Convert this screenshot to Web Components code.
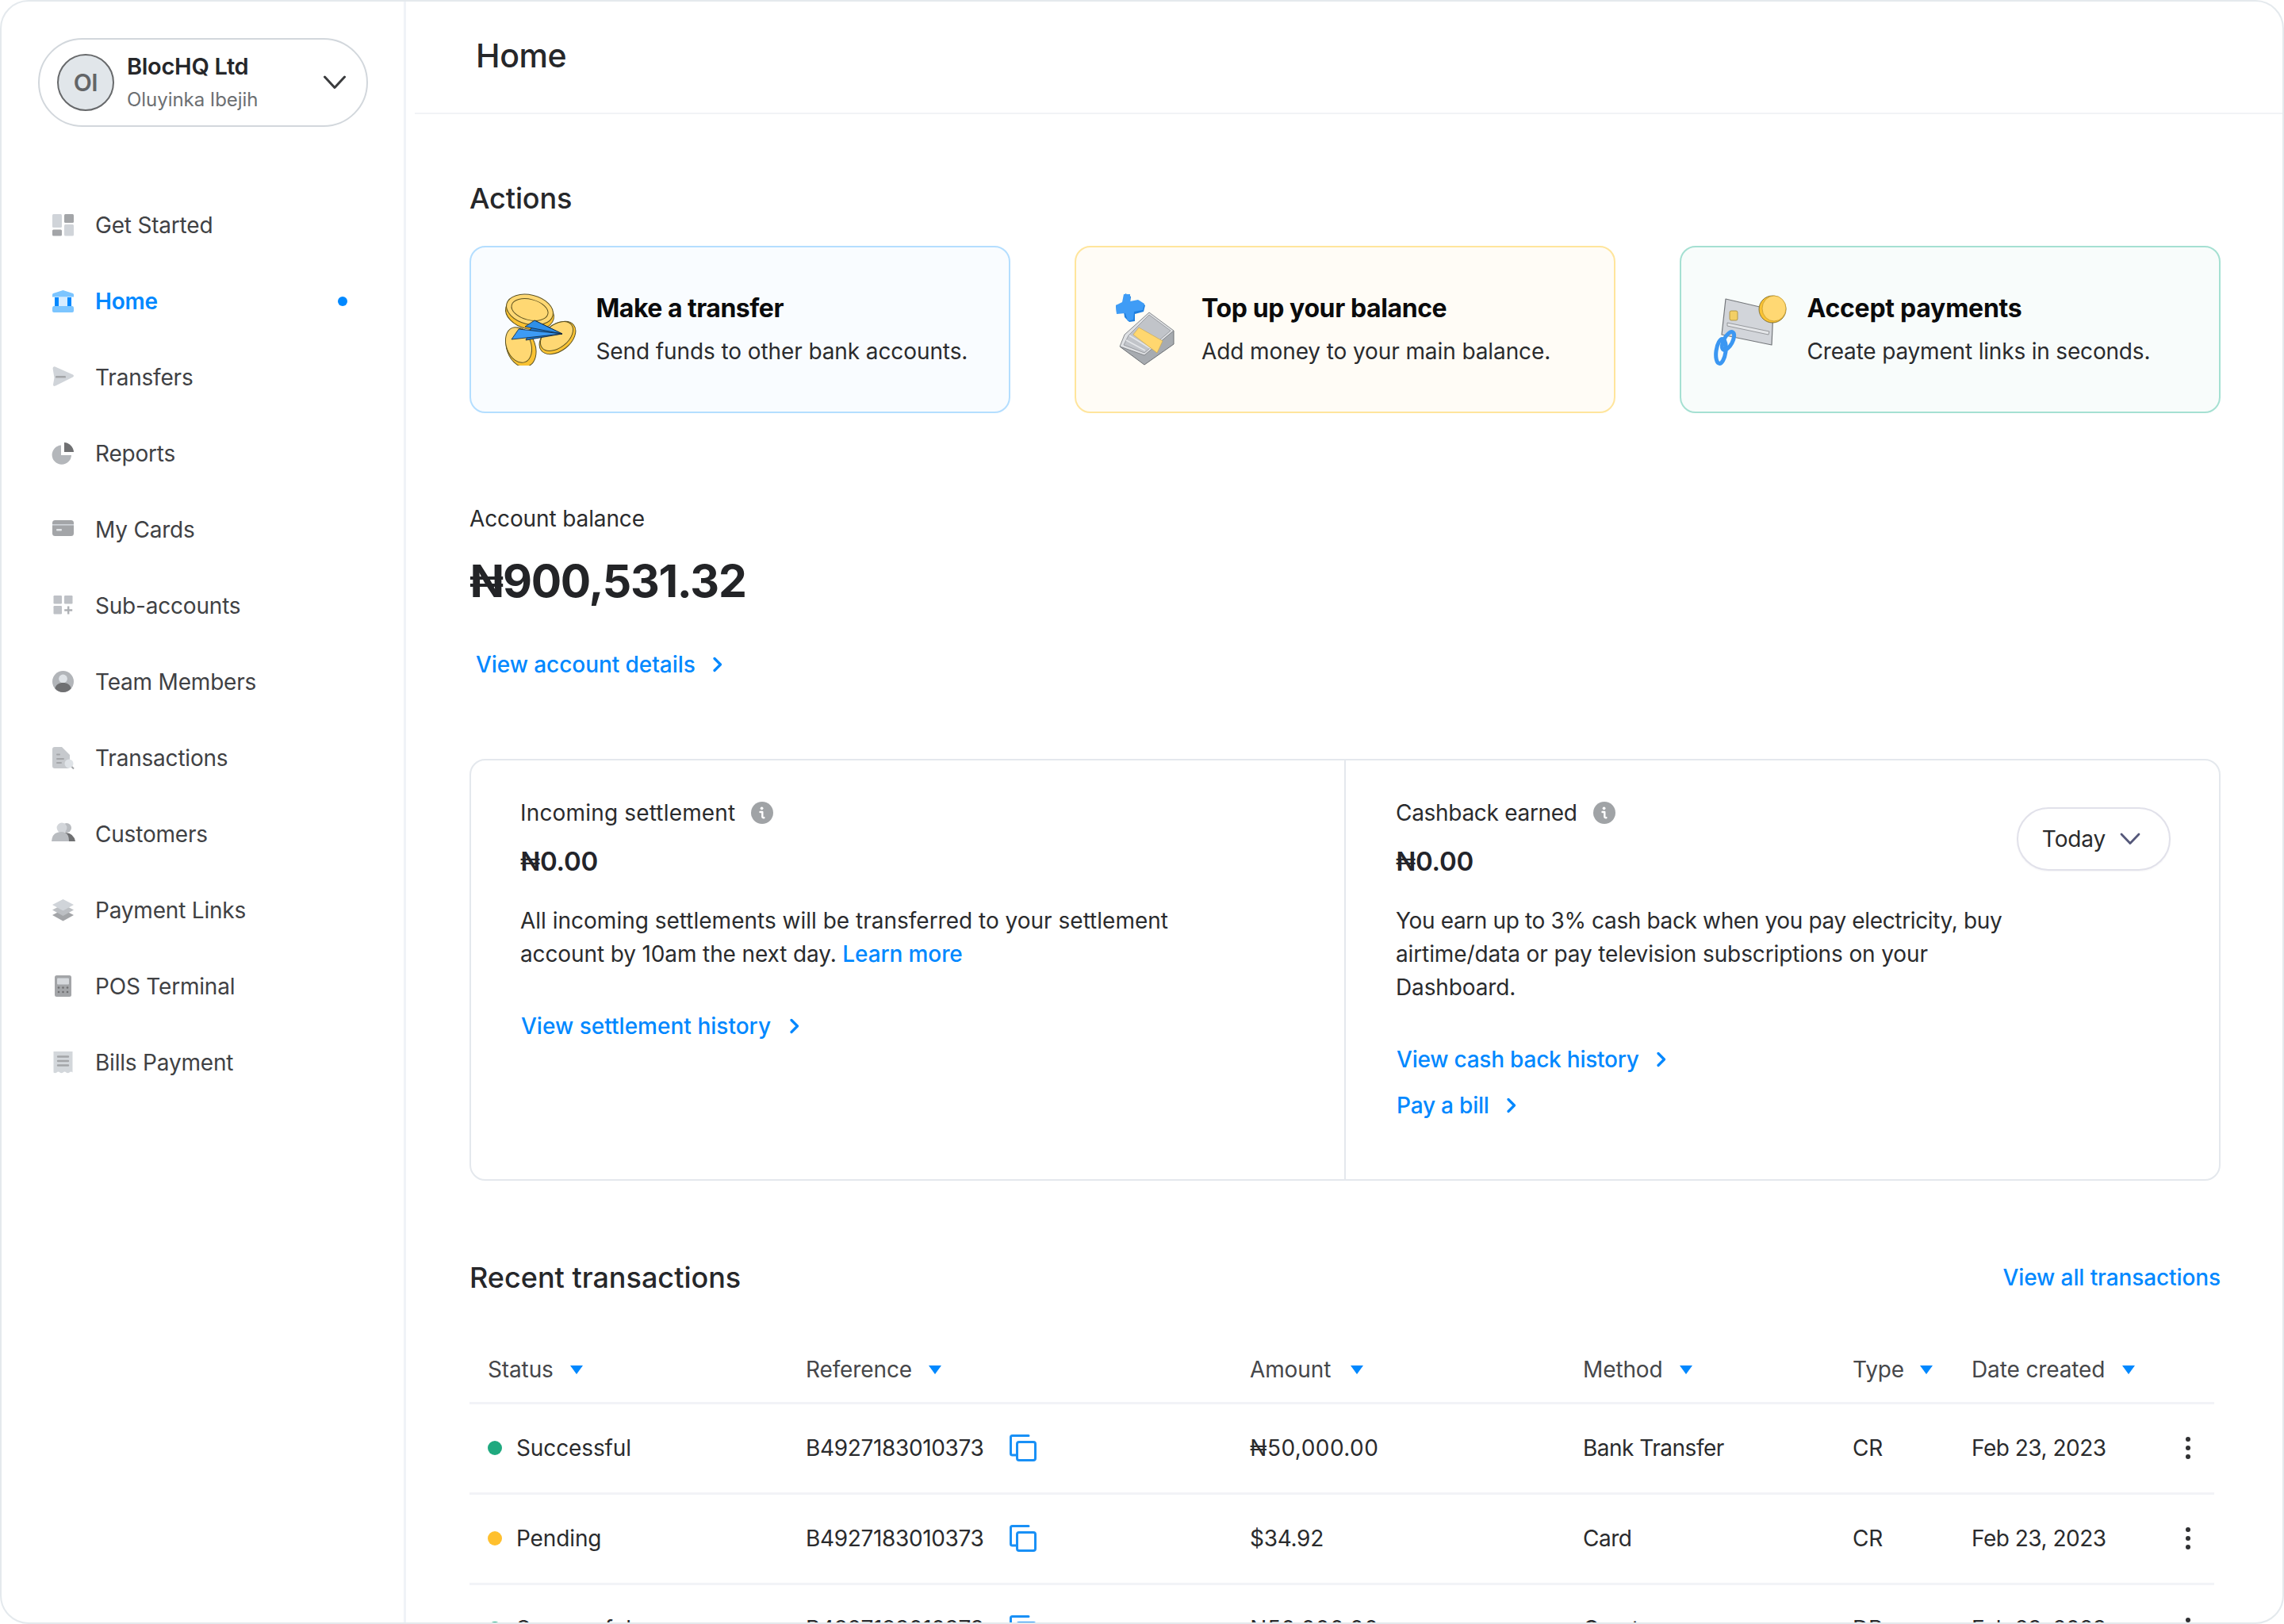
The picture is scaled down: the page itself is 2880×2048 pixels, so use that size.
<!DOCTYPE html>
<html lang="en"><head><meta charset="utf-8"><title>Home</title>
<style>
html,body{margin:0;padding:0;background:#fff;font-family:Inter,"Liberation Sans",sans-serif;color:#26272a}
</style></head><body>
<app-frame>
  <side-bar slot="side">
    <account-switcher></account-switcher>
    <nav-item icon="started">Get Started</nav-item>
    <nav-item icon="home" active>Home</nav-item>
    <nav-item icon="transfers">Transfers</nav-item>
    <nav-item icon="reports">Reports</nav-item>
    <nav-item icon="cards">My Cards</nav-item>
    <nav-item icon="sub">Sub-accounts</nav-item>
    <nav-item icon="team">Team Members</nav-item>
    <nav-item icon="tx">Transactions</nav-item>
    <nav-item icon="customers">Customers</nav-item>
    <nav-item icon="links">Payment Links</nav-item>
    <nav-item icon="pos">POS Terminal</nav-item>
    <nav-item icon="bills">Bills Payment</nav-item>
  </side-bar>
  <home-page slot="main"></home-page>
</app-frame>
<script>
const def=(n,html,fn)=>customElements.define(n,class extends HTMLElement{
  connectedCallback(){if(this.shadowRoot)return;const s=this.attachShadow({mode:'open'});s.innerHTML=typeof html==='function'?html(this):html;fn&&fn(this,s)}
});
const FONT='font-family:Inter,"Liberation Sans",sans-serif;';

def('app-frame',`<style>
:host{display:block;width:2880px;height:2048px;overflow:hidden;${FONT}}
.f{box-sizing:border-box;width:2880px;height:2048px;border:2px solid #e4e9ed;border-radius:36px;overflow:hidden;display:grid;grid-template-columns:510px 1fr;background:#fff}
</style><div class="f"><slot name="side"></slot><slot name="main"></slot></div>`);

def('side-bar',`<style>
:host{display:block;box-sizing:border-box;height:2044px;border-right:3px solid #f0f3f7;padding:46px 0 0 0}
</style><slot></slot>`);

def('account-switcher',`<style>
:host{display:flex;box-sizing:border-box;width:416px;height:112px;margin:0 0 76px 46px;border:2px solid #d2d7dc;border-radius:56px;align-items:center;padding:0 26px 0 22px}
.av{box-sizing:border-box;width:72px;height:72px;border-radius:50%;background:#e1e6ea;border:2px solid #67696b;display:flex;align-items:center;justify-content:center;font-size:30px;font-weight:600;color:#636567;letter-spacing:-.5px;flex:none}
.t{margin-left:16px;flex:1;display:flex;flex-direction:column;gap:10px}
.a{font-size:29px;line-height:34px;font-weight:600;color:#26272a;letter-spacing:-.3px}
.b{font-size:24px;line-height:30px;color:#6c6f72;letter-spacing:-.05px}
svg{flex:none;display:block}
</style><div class="av">OI</div><div class="t"><div class="a">BlocHQ Ltd</div><div class="b">Oluyinka Ibejih</div></div>
<svg width="28" height="18" viewBox="0 0 28 18"><path d="M1.5 2 L14 15.5 L26.5 2" fill="none" stroke="#3a3b3d" stroke-width="3" stroke-linecap="round" stroke-linejoin="round"/></svg>`);

const L='#d0d4d9',M='#b4b7bb',D='#a3a5a8',K='#6f7072';
const ICONS={
started:`<rect x="0" y="0" width="12" height="17" rx="1.5" fill="${L}"/><rect x="15" y="0" width="12" height="11" rx="1.5" fill="${D}"/><rect x="0" y="19.5" width="12" height="8" rx="1.5" fill="${D}"/><rect x="15" y="13" width="12" height="14.5" rx="1.5" fill="${L}"/>`,
home:`<path d="M13.5 0 L26 4 Q27 4.6 27 6 L27 8.5 L0 8.5 L0 6 Q0 4.6 1 4 Z" fill="#7cc5ff"/><rect x="8" y="9" width="11" height="11" fill="#d6ecff"/><rect x="3" y="9" width="5" height="11" fill="#0088ff"/><rect x="19" y="9" width="5" height="11" fill="#0088ff"/><path d="M2 20 L25 20 Q27 20 27 23 L27 26 Q27 28 25 28 L2 28 Q0 28 0 26 L0 23 Q0 20 2 20Z" fill="#7cc5ff"/>`,
transfers:`<path d="M3.6.4 L26 10.5 Q28 12 26 13.6 L4 24.6 Q1 25.8 1 23 L2.5 14.5 L0.6 3 Q.6 -.2 3.6 .4Z" fill="${L}"/><rect x="4" y="12" width="13" height="2.6" rx="1.2" fill="${D}"/>`,
reports:`<path d="M11 3.4 A12.2 12.2 0 1 0 24 16 L11 16 Z" fill="${M}"/><path d="M15 0 A13 13 0 0 1 27 12 L15 12 Z" fill="${K}"/>`,
cards:`<rect x="0" y="2" width="27" height="20" rx="3.5" fill="${D}"/><rect x="0" y="7" width="27" height="1.6" fill="${L}"/><rect x="5" y="13" width="7" height="2.4" rx="1" fill="#e2e5e8"/>`,
sub:`<rect x="1.5" y="1" width="10.5" height="10.5" rx="1.2" fill="#bec1c6"/><rect x="15" y="1" width="10.5" height="10.5" rx="1.2" fill="#bec1c6"/><rect x="1.5" y="14" width="10.5" height="10.5" rx="1.2" fill="#bec1c6"/><path d="M20.2 14.5 V24.5 M15.2 19.5 H25.2" stroke="#aeb1b5" stroke-width="2.4" fill="none"/>`,
team:`<circle cx="13.5" cy="13.5" r="13.5" fill="#b2b5b9"/><circle cx="13.5" cy="10" r="5.4" fill="#dfe3e7"/><path d="M3.3 22.3 C4.5 17 8.5 15 13.5 15 C18.5 15 22.5 17 23.7 22.3 A13.5 13.5 0 0 1 3.3 22.3Z" fill="${K}"/>`,
tx:`<path d="M3 0 L12 0 L22 10 L22 23 Q22 27 19 27 L3 27 Q0 27 0 24 L0 3 Q0 0 3 0Z" fill="#c6c9cd"/><rect x="5" y="8.5" width="5" height="2" rx="1" fill="${D}"/><rect x="5" y="14" width="10" height="2" rx="1" fill="${D}"/><rect x="5" y="19" width="7" height="2" rx="1" fill="${D}"/><circle cx="21" cy="21" r="5.5" fill="#dfe3e7"/><path d="M24.5 25 L27 27.5" stroke="${D}" stroke-width="2"/>`,
customers:`<circle cx="18" cy="6" r="6" fill="#b9bcc0"/><path d="M8 23 Q9 13 17 12 Q27 13 29 23Z" fill="${K}"/><circle cx="12" cy="6" r="6.4" fill="#d3d6da"/><path d="M-1 23 Q0 13.5 6 12 Q12 10 16 12 Q21 14 21 23Z" fill="#b9bcc0"/>`,
links:`<path d="M13.5 13 L27 20 L13.5 27.5 L0 20Z" fill="${D}"/><path d="M13.5 6.5 L27 13.5 L13.5 21 L0 13.5Z" fill="#bcbfc3"/><path d="M13.5 0 L27 7 L13.5 14.5 L0 7Z" fill="${L}"/>`,
pos:`<rect x="3" y="0" width="21" height="27" rx="2.5" fill="${D}"/><rect x="6" y="3.5" width="15" height="8" rx="1" fill="#d6d9dd"/><g fill="#6f7072"><circle cx="8" cy="15.5" r="1.3"/><circle cx="13.5" cy="15.5" r="1.3"/><circle cx="19" cy="15.5" r="1.3"/><circle cx="8" cy="21" r="1.3"/><circle cx="13.5" cy="21" r="1.3"/><circle cx="19" cy="21" r="1.3"/></g>`,
bills:`<path d="M1.5 0 L25.5 0 L25.5 26.5 Q23.5 24.5 21.5 26.5 Q19.5 28 17.5 26.5 Q15.5 24.5 13.5 26.5 Q11.5 28 9.5 26.5 Q7.5 24.5 5.5 26.5 Q3.5 28 1.5 26.5Z" fill="#d3d7db"/><path d="M7 6.5 H20 M7 12 H20 M7 17.5 H20" stroke="${D}" stroke-width="2.4" stroke-linecap="round"/>`
};
def('nav-item',h=>`<style>
:host{display:flex;align-items:center;height:96px;margin-left:64px;width:394px;font-size:28px;color:${h.hasAttribute('active')?'#0088ff':'#404144'};font-weight:${h.hasAttribute('active')?600:400};letter-spacing:-.2px}
svg{width:28px;height:28px;flex:none;overflow:visible;display:block}
.t{margin-left:26px;flex:1}
.d{width:12px;height:12px;border-radius:50%;background:#0088ff;margin-right:22px}
</style><svg viewBox="0 0 28 28">${ICONS[h.getAttribute('icon')]}</svg><span class="t"><slot></slot></span>${h.hasAttribute('active')?'<span class="d"></span>':''}`);

const ILLO={
transfer:`<svg width="94" height="92" viewBox="634 371 94 92">
<g stroke="#5d5220" stroke-width="1">
<ellipse cx="668" cy="397" rx="31" ry="20" transform="rotate(14 668 397)" fill="#f9c233"/>
<ellipse cx="668" cy="392.5" rx="30" ry="18.5" transform="rotate(14 668 392.5)" fill="#ffd873"/>
<ellipse cx="668" cy="392.5" rx="23.5" ry="13" transform="rotate(14 668 392.5)" fill="#ffd873"/>
<ellipse cx="703" cy="428" rx="16.5" ry="26" transform="rotate(52 703 428)" fill="#f9c233"/>
<ellipse cx="702" cy="426" rx="14.5" ry="23.5" transform="rotate(52 702 426)" fill="#ffd873"/>
<ellipse cx="657" cy="440" rx="18" ry="25.5" transform="rotate(-20 657 440)" fill="#f9c233"/>
<ellipse cx="654" cy="437" rx="15.5" ry="23" transform="rotate(-20 654 437)" fill="#ffd873"/>
</g>
<path d="M674 406 L709 423 L663 431Z" fill="#1d76cc" stroke="#123" stroke-width=".8"/>
<path d="M674 406 L709 423 L662 414Z" fill="#2f8fe8" stroke="#123" stroke-width=".8"/>
<path d="M654 417 L709 423 L645 430Z" fill="#3d9bf5" stroke="#123" stroke-width=".8"/>
</svg>`,
topup:`<svg width="94" height="92" viewBox="1400 370 94 92">
<path d="M1419 371 L1426 375 L1425 383 L1436 380 L1444 386 L1442 394 L1431 397 L1431 406 L1424 407 L1418 401 L1417 394 L1408 396 L1407 386 L1418 383Z" fill="#1e7fdf"/>
<path d="M1417 372 L1425 372 L1425 381 L1435 379 L1443 384 L1441 392 L1430 394 L1429 404 L1422 406 L1419 396 L1408 397 L1407 386 L1415 382Z" fill="#3f9cf6"/>
<path d="M1412 438 L1443 461 L1480 435 L1480 418 L1443 447Z" fill="#a7abb0" stroke="#6d7074" stroke-width="1"/>
<path d="M1418 423 L1449 395 L1480 418 L1443 449 L1412 438Z" fill="#dfe1e4" stroke="#85888c" stroke-width="1" stroke-linejoin="round"/>
<path d="M1423 424 L1449 398 L1476 418 L1443 446 L1417 436Z" fill="#c1c4c9" stroke="#8e9195" stroke-width=".8"/>
<path d="M1420 430 L1444 443 M1424 424 L1450 440" stroke="#e4e6e9" stroke-width="1.6" fill="none"/>
<path d="M1436 414 L1466 431 L1459 446 L1429 423Z" fill="#ffd76f" stroke="#c7a54a" stroke-width=".6"/>
</svg>`,
accept:`<svg width="94" height="92" viewBox="2160 370 94 92">
<path d="M2176 378 L2236 392 L2234 436 L2171 423Z" fill="#d2d5da" stroke="#74777b" stroke-width="1.2" stroke-linejoin="round"/>
<rect x="2181" y="393" width="10" height="12" rx="2" fill="#f3cf66" stroke="#a58a39" stroke-width=".8"/>
<path d="M2178 408 L2231 419 L2230 423 L2178 412Z" fill="#e4e6e9" stroke="#85888c" stroke-width=".8"/>
<circle cx="2235" cy="391" r="17" fill="#f9c233" stroke="#6d5f23" stroke-width=".8"/>
<ellipse cx="2237" cy="390" rx="15" ry="16" fill="#ffd873" stroke="#c79b2c" stroke-width=".8"/>
<ellipse cx="2170" cy="444" rx="6" ry="15.5" transform="rotate(8 2170 444)" fill="none" stroke="#3b97f2" stroke-width="5"/>
<ellipse cx="2179" cy="431" rx="5.5" ry="12.5" transform="rotate(28 2179 431)" fill="none" stroke="#3b97f2" stroke-width="5"/>
</svg>`};
def('action-card',h=>{const v=h.getAttribute('v');const c={transfer:['#b4deff','#f9fcff','39.5px','24px','-.5px','-.1px'],topup:['#ffe59c','#fffcf6','43px','21px','-.4px','-.1px'],accept:['#a5e0d2','#f8fcfb','39.5px','25px','-.25px','-.18px']}[v];return `<style>
:host{display:flex;box-sizing:border-box;height:211px;border:2.5px solid ${c[0]};background:${c[1]};border-radius:20px;align-items:center;padding-left:${c[2]}}
svg{flex:none;display:block;margin-top:-1px}
.t{margin-left:${c[3]};display:flex;flex-direction:column;gap:18px}
b{font-size:32px;line-height:36px;font-weight:700;color:#0b0b0c;letter-spacing:${c[4]}}
span{font-size:28px;line-height:36px;color:#2a2b2d;letter-spacing:${c[5]};white-space:nowrap}
</style>${ILLO[v]}<div class="t"><b>${h.getAttribute('h')}</b><span>${h.getAttribute('d')}</span></div>`});

def('more-link',`<style>
:host{display:flex;align-items:center;height:40px;gap:22px;font-size:28px;font-weight:500;color:#0088ff;letter-spacing:-.06px}
svg{display:block;flex:none}
</style><span><slot></slot></span><svg width="12" height="20" viewBox="0 0 12 20"><path d="M2 2.5 L9.5 10 L2 17.5" fill="none" stroke="#0088ff" stroke-width="3.2" stroke-linecap="round" stroke-linejoin="round"/></svg>`);

def('info-dot',`<style>:host{display:inline-flex}svg{display:block}</style><svg width="28" height="28" viewBox="0 0 28 28"><circle cx="14" cy="14" r="14" fill="#a0a3a6"/><circle cx="13.6" cy="8.3" r="1.9" fill="#fff"/><path d="M11.5 13 H14.3 V19 Q14.3 20.4 16.4 20.2" fill="none" stroke="#fff" stroke-width="2.4" stroke-linecap="round" stroke-linejoin="round"/></svg>`);

def('stat-block',h=>`<style>
:host{display:block}
.h{display:flex;align-items:center;gap:20px;font-size:28px;line-height:40px;letter-spacing:${h.getAttribute('hs')||'-.12px'};color:#2a2b2d}
.v{font-size:33px;line-height:48px;font-weight:600;margin-top:17px;color:#23242a;letter-spacing:-.2px}
.p{font-size:28px;line-height:42px;margin-top:30px;color:#2a2b2d;letter-spacing:-.12px;white-space:nowrap}
.l{margin-top:50px;display:flex;flex-direction:column;gap:18px;margin-left:1px}
</style><div class="h"><span>${h.getAttribute('h')}</span><info-dot></info-dot></div><div class="v">${h.getAttribute('v')}</div><div class="p"><slot></slot></div><div class="l"><slot name="link"></slot></div>`);

def('today-select',`<style>
:host{display:flex;box-sizing:border-box;width:194px;height:80px;border:2px solid #e1e1ea;border-radius:40px;align-items:center;justify-content:center;gap:18px;font-size:28px;letter-spacing:-.12px;color:#2a2b2d;box-shadow:0 1px 2px rgba(40,40,80,.05);background:#fff;padding-right:6px}
svg{display:block}
</style><span>Today</span><svg width="26" height="16" viewBox="0 0 26 16"><path d="M2 2 L13 13.5 L24 2" fill="none" stroke="#55587a" stroke-width="2.8" stroke-linecap="round" stroke-linejoin="round"/></svg>`);

const COLS='grid-template-columns:401px 560px 420px 340px 150px 244px 1fr;';
def('tx-head',`<style>
:host{display:grid;${COLS}height:84px;align-items:center;box-sizing:border-box;padding:0 0 2px 23px;border-bottom:3px solid #f2f3f7;font-size:28px;color:#46474a;letter-spacing:-.12px}
.c{display:flex;align-items:center;gap:21px}
i{display:block;width:0;height:0;border-left:8.5px solid transparent;border-right:8.5px solid transparent;border-top:11px solid #0088ff;margin-top:1px}
</style>
<div class="c">Status<i></i></div><div class="c">Reference<i></i></div><div class="c" style="gap:25px">Amount<i></i></div><div class="c">Method<i></i></div><div class="c" style="gap:20px">Type<i></i></div><div class="c" style="gap:22px">Date created<i></i></div>`);

def('tx-row',h=>{const a=n=>h.getAttribute(n);return `<style>
:host{display:grid;${COLS}height:114px;align-items:center;box-sizing:border-box;padding:0 0 2px 23px;border-bottom:3px solid #f2f3f7;font-size:28px;color:#2a2b2d;letter-spacing:-.12px}
.c{display:flex;align-items:center}
.dot{width:18px;height:18px;border-radius:50%;background:${a('color')};margin-right:18px;flex:none}
svg{display:block;flex:none}
</style>
<div class="c"><span class="dot"></span>${a('status')}</div>
<div class="c"><span style="letter-spacing:-.35px">B4927183010373</span><svg style="margin-left:32px" width="34" height="34" viewBox="0 0 34 34"><path d="M8 26 H3.5 Q1.5 26 1.5 24 V3.5 Q1.5 1.5 3.5 1.5 H24" fill="none" stroke="#1990f6" stroke-width="3" stroke-linecap="round"/><rect x="9.5" y="9.5" width="23" height="23" rx="2.5" fill="#fff" stroke="#1990f6" stroke-width="3"/></svg></div>
<div style="letter-spacing:${a('amount').startsWith('₦')?'.45px':'-.3px'}">${a('amount')}</div><div style="letter-spacing:-.5px">${a('method')}</div><div>${a('type')}</div><div style="letter-spacing:-.5px">Feb 23, 2023</div>
<div class="c" style="padding-left:26px"><svg width="6" height="28" viewBox="0 0 6 28"><circle cx="3" cy="3" r="3" fill="#303133"/><circle cx="3" cy="14" r="3" fill="#303133"/><circle cx="3" cy="25" r="3" fill="#303133"/></svg></div>`});

def('home-page',`<style>
:host{display:block;${FONT}}
header{margin-left:11px;height:142px;border-bottom:2px solid #f1f3f6;display:flex;align-items:center;padding:0 0 4px 77px;box-sizing:border-box;font-size:41px;font-weight:500;color:#26272a;letter-spacing:-.4px}
.c{padding:0 80px 0 80px}
h2{margin:0;font-size:36px;line-height:44px;font-weight:500;color:#26272a;letter-spacing:-.12px}
.cards{display:grid;grid-template-columns:repeat(3,682px);column-gap:81px;margin-top:38px}
.lb{margin-top:113px;font-size:28px;line-height:40px;letter-spacing:-.12px;color:#2a2b2d}
.amt{margin-top:23px;font-size:57px;line-height:72px;font-weight:700;color:#232427;letter-spacing:-1.25px}
more-link.va{margin:49px 0 0 8px}
.panel{box-sizing:border-box;margin-top:99px;height:532px;border:2px solid #e4e8ed;border-radius:20px;display:grid;grid-template-columns:1103px 1fr}
.pl{padding:46px 0 0 62px;border-right:2px solid #e4e8ed}
.pr{padding:46px 61px 0 63px;display:flex;justify-content:space-between;align-items:flex-start}
today-select{margin-top:13px}
.rh{margin-top:100px;display:flex;justify-content:space-between;align-items:center}
.rh h2{letter-spacing:0}
.rh a{font-size:28px;font-weight:500;color:#0088ff;letter-spacing:-.1px}
.t{margin-top:54px;width:2200px}
</style>
<header>Home</header>
<div class="c">
<div style="height:84px"></div>
<h2>Actions</h2>
<div class="cards">
<action-card v="transfer" h="Make a transfer" d="Send funds to other bank accounts."></action-card>
<action-card v="topup" h="Top up your balance" d="Add money to your main balance."></action-card>
<action-card v="accept" h="Accept payments" d="Create payment links in seconds."></action-card>
</div>
<div class="lb">Account balance</div>
<div class="amt">₦900,531.32</div>
<more-link class="va">View account details</more-link>
<div class="panel">
<div class="pl"><stat-block h="Incoming settlement" hs=".17px" v="₦0.00"><span style="letter-spacing:0">All incoming settlements will be transferred to your settlement</span><br>account by 10am the next day. <a href="#" style="color:#0088ff;font-weight:500;text-decoration:none">Learn more</a><more-link slot="link" style="letter-spacing:.02px;gap:24px">View settlement history</more-link></stat-block></div>
<div class="pr"><stat-block h="Cashback earned" hs="-.3px" v="₦0.00"><span style="letter-spacing:-.36px">You earn up to 3% cash back when you pay electricity, buy</span><br>airtime/data or pay television subscriptions on your<br>Dashboard.<more-link slot="link" style="letter-spacing:-.22px">View cash back history</more-link><more-link slot="link" style="letter-spacing:-.2px">Pay a bill</more-link></stat-block><today-select></today-select></div>
</div>
<div class="rh"><h2>Recent transactions</h2><a>View all transactions</a></div>
<div class="t">
<tx-head></tx-head>
<tx-row color="#1fa97f" status="Successful" amount="₦50,000.00" method="Bank Transfer" type="CR"></tx-row>
<tx-row color="#ffc02e" status="Pending" amount="$34.92" method="Card" type="CR"></tx-row>
<tx-row color="#1fa97f" status="Successful" amount="₦50,000.00" method="Grant" type="DB"></tx-row>
</div>
</div>`);
</script>
</body></html>
